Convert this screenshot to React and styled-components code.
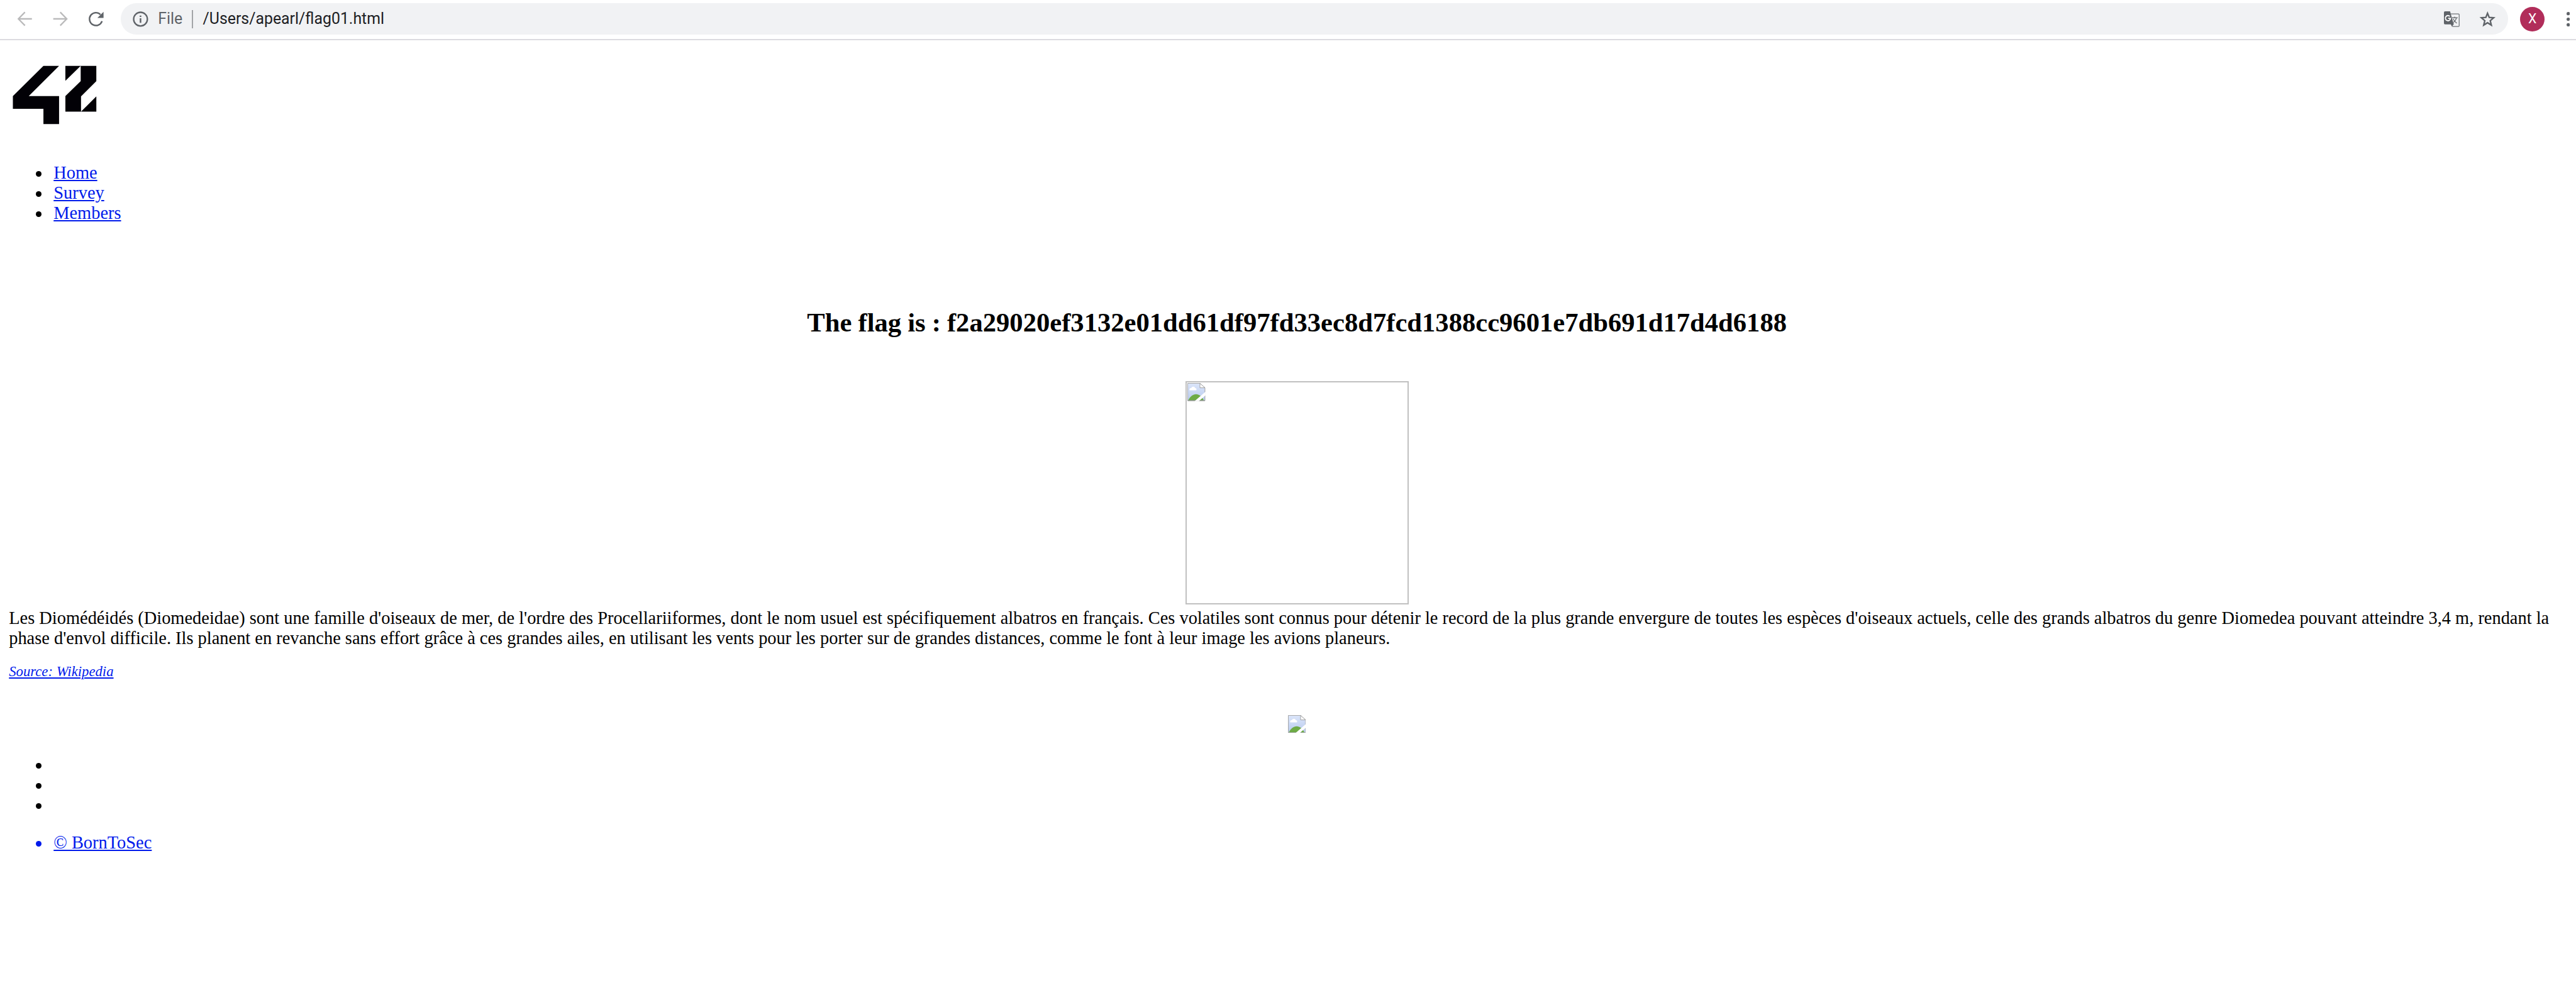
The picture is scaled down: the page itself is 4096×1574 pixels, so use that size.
import React from "react";
import styled, { createGlobalStyle } from "styled-components";

/* 1rem = 10 design pixels; the design is 461.2rem wide */
const GlobalStyle = createGlobalStyle`
  html { font-size: 8.8812px; background: #fff; overflow: hidden; }
  body { margin: 0; }
  * { box-sizing: border-box; }
`;

const Window = styled.div`
  width: 461.2rem;
  height: 177.2rem;
  overflow: hidden;
  display: flex;
  flex-direction: column;
  background: #fff;
`;

const Toolbar = styled.header`
  flex: none;
  display: flex;
  align-items: center;
  height: 7.2rem;
  padding: 0 1.1rem 0.2rem 2.8rem;
  border-bottom: 2px solid #dcdbe0;
`;

const ToolButton = styled.button`
  flex: none;
  display: flex;
  align-items: center;
  justify-content: center;
  width: 3.2rem;
  height: 3.2rem;
  margin: 0 ${(p) => p.$gap || 3.2}rem 0 0;
  padding: 0;
  border: 0;
  background: none;
  color: ${(p) => (p.$muted ? "#bababb" : "#5f6368")};
`;

const Glyph = styled.svg`
  display: block;
  flex: none;
  width: ${(p) => p.$w || 3.2}rem;
  height: ${(p) => p.$h || p.$w || 3.2}rem;
`;

const Omnibox = styled.div`
  flex: 1;
  display: flex;
  align-items: center;
  height: 5.6rem;
  margin-right: 2.2rem;
  padding: 0.1rem 2.1rem 0 2.2rem;
  border-radius: 2.8rem;
  background: #f1f2f4;
  color: #5f6368;
`;

const Scheme = styled.span`
  margin-left: 1.7rem;
  font: 2.8rem/3.4rem Roboto, sans-serif;
  width: 6.1rem;
`;

const Divider = styled.span`
  width: 2px;
  height: 3.2rem;
  margin-right: 1.7rem;
  background: #a2a4a7;
`;

const Address = styled.span`
  flex: 1;
  font: 2.8rem/3.4rem Roboto, sans-serif;
  color: #202124;
`;

const OmniAction = styled.span`
  display: flex;
  margin-left: ${(p) => p.$gap || 0}rem;
`;

const Avatar = styled.div`
  flex: none;
  display: flex;
  align-items: center;
  justify-content: center;
  width: 4.4rem;
  height: 4.4rem;
  margin-right: 3.9rem;
  border-radius: 50%;
  background: #b12d5a;
  color: #fff;
  font: 2.4rem/1 Roboto, sans-serif;
`;

const Page = styled.main`
  width: 461.2rem;
  margin: 1.6rem 0 0 1.6rem;
  color: #000;
  font: 3.2rem/3.6rem "Liberation Serif", "Times New Roman", serif;
`;

const LogoLink = styled.div`
  height: 20.35rem;
`;

const List = styled.ul`
  margin: 0;
  padding: 0 0 0 4.8rem;
  list-style: none;
`;

const Item = styled.li`
  display: flex;
  align-items: center;
  height: 3.6rem;
  color: ${(p) => (p.$blue ? "#001aeb" : "#000")};

  &::before {
    content: "";
    flex: none;
    width: 1rem;
    height: 1rem;
    margin: 0.3rem 2.2rem 0 0;
    border-radius: 50%;
    background: currentColor;
  }
`;

const Link = styled.a`
  color: #001aeb;
  text-decoration: underline;
  text-decoration-thickness: 2px;
  text-underline-offset: 0.2rem;
`;

const Title = styled.h2`
  margin: 15.15rem 0 0;
  text-align: center;
  font-size: 4.8rem;
  line-height: 5.4rem;
  font-weight: bold;
  word-spacing: -0.065rem;
`;

const MissingPicture = styled.div`
  width: 40rem;
  height: 40rem;
  margin: 7.7rem auto 0;
  padding: 0.2rem;
  border: 2px solid #c0c0c0;
`;

const Article = styled.p`
  margin: 0.7rem 0 0;
  white-space: nowrap;
`;

const Source = styled.div`
  margin-top: 2.75rem;
  font-size: 2.56rem;
  line-height: 3rem;
  font-style: italic;
`;

const FooterPicture = styled.div`
  display: flex;
  justify-content: center;
  margin-top: 6.15rem;
`;

const FooterList = styled(List)`
  margin-top: ${(p) => p.$gap}rem;
`;

const BrokenImage = () => (
  <Glyph viewBox="0 0 32 32">
    <defs>
      <linearGradient id="sky" x1="0" y1="0" x2="0" y2="1">
        <stop offset="0" stopColor="#dbe5fa" />
        <stop offset="1" stopColor="#b9cbee" />
      </linearGradient>
    </defs>
    <path d="M.5.5H22.5L31.5 8.500V31.5H.5Z" fill="url(#sky)" stroke="#999" />
    <path d="M1.500 31C5 24 10 20 15.500 20S26 24 29.500 31Z" fill="#6eab46" />
    <path d="M4 13C3 10 5 8.500 7 9C8 5.500 13 5.500 14 9C16 9 17 11 16 13Z" fill="#fff" />
    <path d="M22.500.5V8.500H31.5Z" fill="#fff" stroke="#999" />
    <path d="M.5 31.5H31.5" stroke="#888" />
    <path d="M32.500 15.500V22L20.500 32.500H13Z" fill="#fff" />
  </Glyph>
);

const BackArrow = () => (
  <Glyph viewBox="0 0 32 32" fill="none" stroke="currentColor" strokeWidth="2.6">
    <path d="M29 15.800H5M16.500 3.800L4.800 15.800L16.500 27.800" />
  </Glyph>
);

const ForwardArrow = () => (
  <Glyph viewBox="0 0 32 32" fill="none" stroke="currentColor" strokeWidth="2.6">
    <path d="M3 15.800H27M15.500 3.800L27.200 15.800L15.500 27.800" />
  </Glyph>
);

const Reload = () => (
  <Glyph viewBox="0 0 32 32" fill="none">
    <path d="M27.300 19.800A11.500 11.500 0 1 1 24.500 8" stroke="currentColor" strokeWidth="2.8" />
    <path d="M30 3V14H19Z" fill="currentColor" />
  </Glyph>
);

const Info = () => (
  <Glyph $w={2.8} viewBox="0 0 28 28" fill="none">
    <circle cx="14" cy="14" r="12.300" stroke="currentColor" strokeWidth="2.600" />
    <path d="M14 12.500V20.500M14 7.500V10.200" stroke="currentColor" strokeWidth="2.800" />
  </Glyph>
);

const Translate = () => (
  <Glyph $w={2.8} viewBox="0 0 28 28" fill="none">
    <path d="M12 4.700H26A1.300 1.300 0 0 1 27.300 6V26A1.300 1.300 0 0 1 26 27.300H15" stroke="#6f7377" strokeWidth="1.400" />
    <path d="M2 0H11L17.500 23.500H2A2 2 0 0 1 0 21.500V2A2 2 0 0 1 2 0Z" fill="#5f6368" />
    <path d="M11.500 22H18L14.500 27.500Z" fill="#5f6368" />
    <path d="M10.500 9A4.600 4.600 0 1 0 11.800 12.600H7.500" stroke="#fff" strokeWidth="2.100" />
    <path d="M14.500 11.500H24.500M19.300 9.500V11.500M22.500 11.500C21.500 16 18.500 19 15.500 21M16.500 13.500C18 17 20.500 19.500 23 21.300" stroke="#6f7377" strokeWidth="1.500" />
  </Glyph>
);

const Star = () => (
  <Glyph $w={3} $h={2.8} viewBox="0 0 30 28" fill="none">
    <path d="M15 3.500L18 10.900L26 11.600L19.900 16.800L21.800 24.600L15 20.400L8.200 24.600L10.100 16.800L4 11.600L12 10.900Z" stroke="currentColor" strokeWidth="2.700" />
  </Glyph>
);

const Menu = () => (
  <Glyph $w={0.6} $h={2.6} viewBox="0 0 6 26" fill="#5f6368">
    <circle cx="3" cy="3" r="3" />
    <circle cx="3" cy="13" r="3" />
    <circle cx="3" cy="23" r="3" />
  </Glyph>
);

const Logo42 = () => (
  <Glyph $w={16} viewBox="0 0 160 160" fill="#020106">
    <path d="M62 30H90L35.700 84.300H90V134.300H62V107H7.300V84.300Z" />
    <path d="M101.300 30H128.700L101.300 57Z" />
    <path d="M128.700 30H156.700V57.300L129.300 84.700V112H101.300V84.300L128.700 57.300Z" />
    <path d="M156.700 84.700V112H129.300Z" />
  </Glyph>
);

export default function App() {
  return (
    <>
      <GlobalStyle />
      <Window>
        <Toolbar>
          <ToolButton $muted><BackArrow /></ToolButton>
          <ToolButton $muted><ForwardArrow /></ToolButton>
          <ToolButton $gap={2.8}><Reload /></ToolButton>
          <Omnibox>
            <Info />
            <Scheme>File</Scheme>
            <Divider />
            <Address>/Users/apearl/flag01.html</Address>
            <OmniAction><Translate /></OmniAction>
            <OmniAction $gap={3.5}><Star /></OmniAction>
          </Omnibox>
          <Avatar>X</Avatar>
          <Menu />
        </Toolbar>
        <Page>
          <LogoLink><Logo42 /></LogoLink>
          <List>
            <Item><Link>Home</Link></Item>
            <Item><Link>Survey</Link></Item>
            <Item><Link>Members</Link></Item>
          </List>
          <Title>The flag is : f2a29020ef3132e01dd61df97fd33ec8d7fcd1388cc9601e7db691d17d4d6188</Title>
          <MissingPicture><BrokenImage /></MissingPicture>
          <Article>
            Les Diomédéidés (Diomedeidae) sont une famille d'oiseaux de mer, de l'ordre des Procellariiformes, dont le nom usuel est spécifiquement albatros en français. Ces volatiles sont connus pour détenir le record de la plus grande envergure de toutes les espèces d'oiseaux actuels, celle des grands albatros du genre Diomedea pouvant atteindre 3,4 m, rendant la
            <br />
            phase d'envol difficile. Ils planent en revanche sans effort grâce à ces grandes ailes, en utilisant les vents pour les porter sur de grandes distances, comme le font à leur image les avions planeurs.
          </Article>
          <Source><Link>Source: Wikipedia</Link></Source>
          <FooterPicture><BrokenImage /></FooterPicture>
          <FooterList $gap={3.95}>
            <Item />
            <Item />
            <Item />
          </FooterList>
          <FooterList $gap={3.2}>
            <Item $blue><Link>© BornToSec</Link></Item>
          </FooterList>
        </Page>
      </Window>
    </>
  );
}
